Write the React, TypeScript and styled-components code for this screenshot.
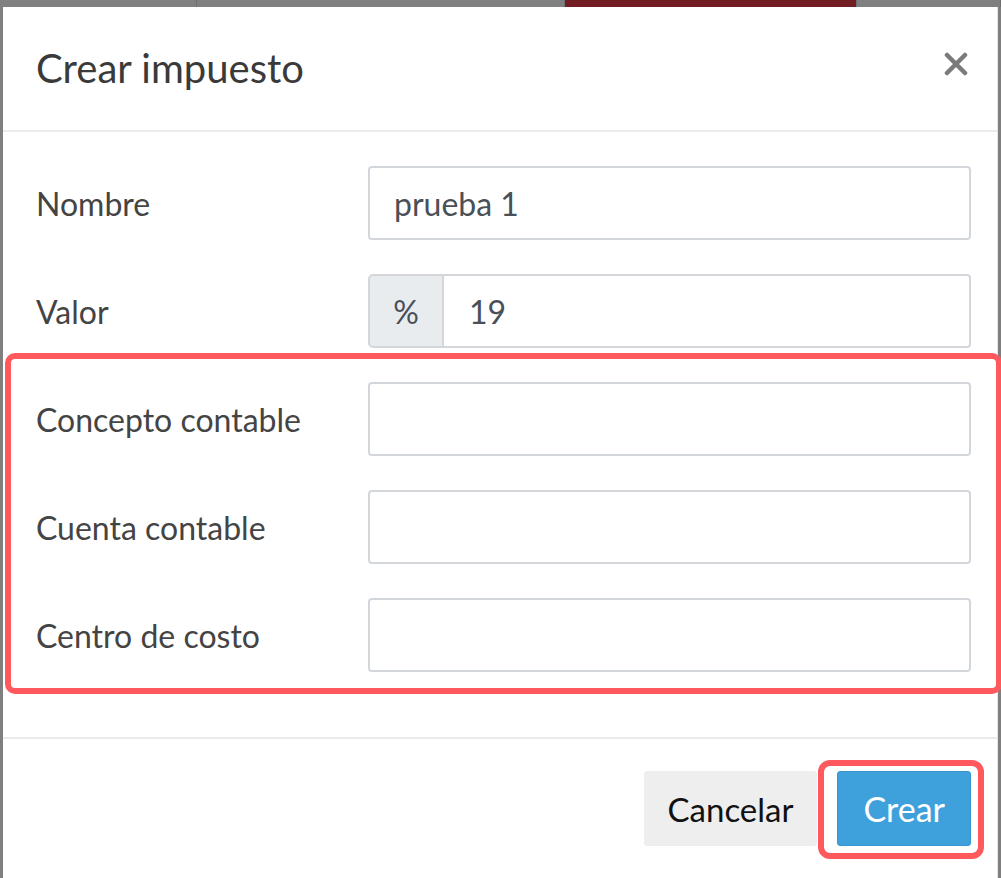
import React from "react";
import styled, { createGlobalStyle } from "styled-components";

const Global = createGlobalStyle`
  html, body { margin: 0; padding: 0; }
  body {
    background: #7f7f7f;
    font-family: Lato, "Open Sans", "Liberation Sans", sans-serif;
    overflow: hidden;
  }
  * { box-sizing: border-box; }
`;

const Screen = styled.div`
  position: relative;
  width: 1001px;
  height: 878px;
  overflow: hidden;
  background: #7f7f7f;
`;

const Backdrop = styled.div`
  height: 7px;
  display: flex;
`;

const BackdropBand = styled.div<{ $w: number; $bg: string }>`
  width: ${(p) => p.$w}px;
  background: ${(p) => p.$bg};
  border-right: 1px solid #6f6f6f;
`;

const Modal = styled.div`
  margin: 0 3px 0 3px;
  background: #fff;
  border-right: 1px solid #e5e5e5;
  height: 880px;
  display: flex;
  flex-direction: column;
`;

const Header = styled.div`
  height: 125px;
  padding: 0 26px 0 33px;
  display: flex;
  align-items: center;
  justify-content: space-between;
  border-bottom: 2px solid #e9ecef;
`;

const Title = styled.h4`
  margin: 0;
  font-size: 40px;
  font-weight: 400;
  color: #3a3a3a;
  padding-bottom: 2px;
`;

const Close = styled.button`
  border: 0;
  background: none;
  padding: 0;
  width: 30px;
  height: 30px;
  display: flex;
  align-items: center;
  justify-content: center;
  margin-bottom: 10px;
`;

const Body = styled.div`
  padding: 34px 26px 65px 33px;
  display: flex;
  flex-direction: column;
  gap: 34px;
  border-bottom: 2px solid #e9ecef;
`;

const Highlight = styled.div`
  position: relative;
  display: flex;
  flex-direction: column;
  gap: 34px;
  &::after {
    content: "";
    position: absolute;
    left: -31px;
    right: -31px;
    top: -29px;
    bottom: -22px;
    border: 6px solid #ff585d;
    border-radius: 10px;
    pointer-events: none;
  }
`;

const Row = styled.div`
  display: grid;
  grid-template-columns: 332px 1fr;
  align-items: center;
`;

const Label = styled.label`
  font-size: 32px;
  color: #444;
`;

const Input = styled.div`
  height: 74px;
  border: 2px solid #d3d7dc;
  border-radius: 4px;
  padding: 0 24px;
  display: flex;
  align-items: center;
  font-size: 32px;
  color: #495057;
  background: #fff;
`;

const Group = styled.div`
  display: flex;
  height: 74px;
`;

const Addon = styled.div`
  width: 76px;
  background: #e9ecef;
  border: 2px solid #d3d7dc;
  border-radius: 5px 0 0 5px;
  display: flex;
  align-items: center;
  justify-content: center;
  font-size: 32px;
  color: #495057;
`;

const GroupInput = styled(Input)`
  flex: 1;
  border-left: 0;
  border-radius: 0 4px 4px 0;
  padding-left: 25px;
`;

const Footer = styled.div`
  padding: 32px 26px 0 0;
  display: flex;
  justify-content: flex-end;
  gap: 20px;
`;

const Button = styled.button<{ $primary?: boolean }>`
  height: 75px;
  padding: 0 ${(p) => (p.$primary ? 25 : 23)}px;
  border: 1px solid ${(p) => (p.$primary ? "#3a95cf" : "#eee")};
  border-radius: 3px;
  background: ${(p) => (p.$primary ? "#3fa1db" : "#eeeeee")};
  color: ${(p) => (p.$primary ? "#fff" : "#111")};
  font-family: Lato, "Open Sans", "Liberation Sans", sans-serif;
  font-size: ${(p) => (p.$primary ? 34 : 33)}px;
  position: relative;
`;

const Mark = styled.span`
  position: absolute;
  left: -20px;
  right: -14px;
  top: -12px;
  bottom: -14px;
  border: 6px solid #ff585d;
  border-radius: 12px;
  pointer-events: none;
`;

export default function App() {
  return (
    <Screen>
      <Global />
      <Backdrop>
        <BackdropBand $w={197} $bg="#808080" />
        <BackdropBand $w={368} $bg="#808080" />
        <BackdropBand $w={292} $bg="#721c24" />
        <BackdropBand $w={144} $bg="#808080" />
      </Backdrop>
      <Modal>
        <Header>
          <Title>Crear impuesto</Title>
          <Close aria-label="Cerrar">
            <svg width="24" height="24" viewBox="0 0 24 24">
              <path d="M3 3 L21 21 M21 3 L3 21" stroke="#7a7a7a" strokeWidth="4.5" strokeLinecap="round" />
            </svg>
          </Close>
        </Header>
        <Body>
          <Row>
            <Label>Nombre</Label>
            <Input>prueba 1</Input>
          </Row>
          <Row>
            <Label>Valor</Label>
            <Group>
              <Addon>%</Addon>
              <GroupInput>19</GroupInput>
            </Group>
          </Row>
          <Highlight>
            <Row>
              <Label>Concepto contable</Label>
              <Input />
            </Row>
            <Row>
              <Label>Cuenta contable</Label>
              <Input />
            </Row>
            <Row>
              <Label>Centro de costo</Label>
              <Input />
            </Row>
          </Highlight>
        </Body>
        <Footer>
          <Button>Cancelar</Button>
          <Button $primary>
            Crear
            <Mark />
          </Button>
        </Footer>
      </Modal>
    </Screen>
  );
}
